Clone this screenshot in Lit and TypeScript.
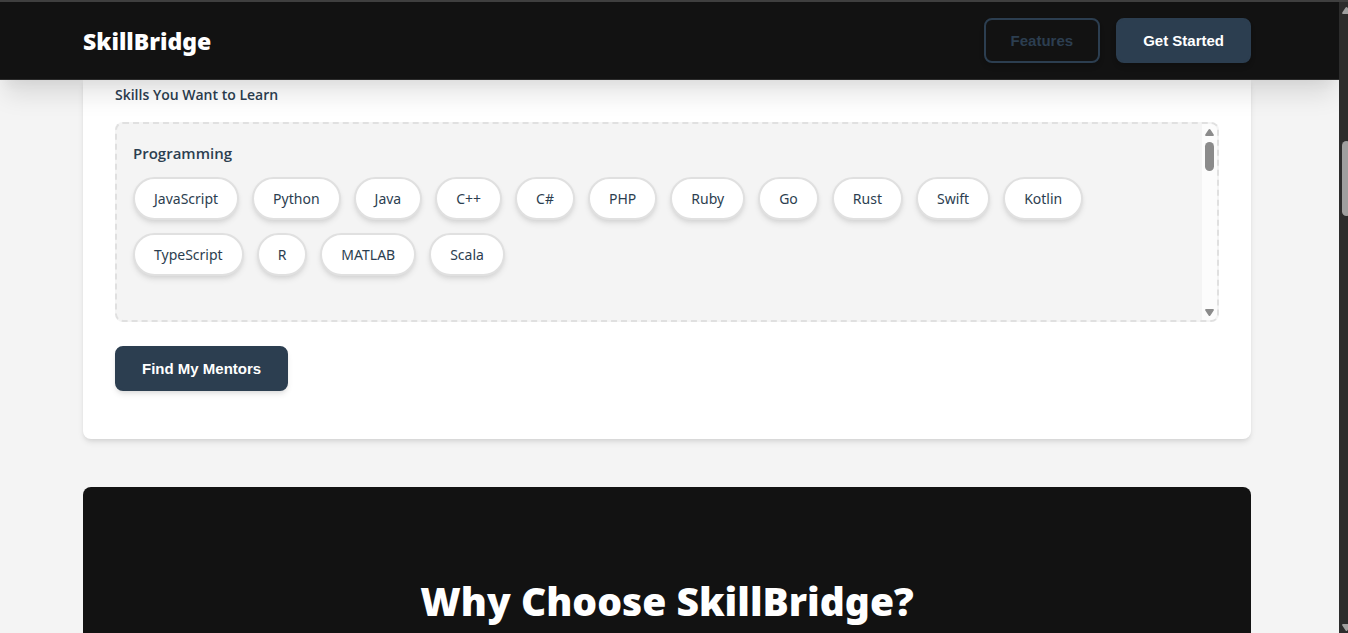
import { LitElement, html, css } from "lit";
import { customElement, state } from "lit/decorators.js";

const LANGUAGES = [
  "JavaScript", "Python", "Java", "C++", "C#", "PHP", "Ruby", "Go", "Rust",
  "Swift", "Kotlin", "TypeScript", "R", "MATLAB", "Scala",
];

@customElement("app-root")
export class AppRoot extends LitElement {
  @state() private picked: string[] = [];

  static styles = css`
    :host {
      display: flex;
      flex-direction: column;
      height: 100vh;
      overflow: hidden;
      background: #f4f4f4;
      color: #2c3e50;
      font-family: "Open Sans", "Noto Sans", sans-serif;
      font-size: 14px;
      line-height: 24px;
      --shadow: 0 4px 6px -1px rgba(0, 0, 0, 0.1), 0 2px 4px -1px rgba(0, 0, 0, 0.06);
    }
    * { box-sizing: border-box; }
    .edge { flex: none; height: 2px; background: #3f3f3f; }
    .frame { flex: 1; display: flex; min-height: 0; }
    .page { flex: 1; min-width: 0; display: flex; flex-direction: column; overflow: hidden; }
    .bar {
      flex: none;
      position: relative;
      z-index: 1;
      padding: 16px 21px 16px 16px;
      background: #121212;
      border-bottom: 1px solid #2c2c2c;
      box-shadow: 0 20px 25px -5px rgba(0, 0, 0, 0.1), 0 10px 10px -5px rgba(0, 0, 0, 0.04);
    }
    .inner {
      display: flex;
      align-items: center;
      justify-content: space-between;
      max-width: 1168px;
      margin: 0 auto;
    }
    .logo {
      color: #fff;
      font-family: "Noto Sans", "Open Sans", sans-serif;
      font-size: 23px;
      font-weight: 900;
      line-height: 32px;
      text-decoration: none;
    }
    .nav { display: flex; gap: 16px; }
    .btn {
      height: 45px;
      padding: 0 25px;
      border: 2px solid #2c3e50;
      border-radius: 8px;
      background: #2c3e50;
      color: #fff;
      font: 700 15px "Liberation Sans", Arial, sans-serif;
      box-shadow: var(--shadow);
    }
    .ghost { background: transparent; color: #2c3e50; }
    .body { flex: 1; min-height: 0; padding: 0 21px 0 16px; }
    .card {
      max-width: 1168px;
      margin: 0 auto 48px;
      padding: 3px 32px 48px;
      background: #fff;
      border-radius: 0 0 8px 8px;
      box-shadow: var(--shadow);
    }
    .label { margin: 0 0 15px; font-size: 14px; font-weight: 600; }
    .picker {
      display: flex;
      height: 200px;
      margin-bottom: 24px;
      border: 2px dashed #e0e0e0;
      border-radius: 8px;
      background: #f4f4f4;
      overflow: hidden;
    }
    .group { flex: 1; padding: 16px; }
    .title { margin: 0 0 11px; font-size: 15px; line-height: 26px; font-weight: 600; }
    .tags { display: flex; flex-wrap: wrap; gap: 13px; }
    .tag {
      height: 43px;
      padding: 0 19px;
      border: 2px solid #e0e0e0;
      border-radius: 22px;
      background: #fff;
      color: #2c3e50;
      font: 400 14px "Noto Sans", "Open Sans", sans-serif;
      box-shadow: var(--shadow);
    }
    .tag[aria-pressed="true"] { border-color: #2c3e50; }
    .track {
      flex: none;
      width: 15px;
      padding: 5px 3px 4px;
      display: flex;
      flex-direction: column;
      background: #fcfcfc;
    }
    .track svg { display: block; width: 9px; height: 7px; fill: #8b8b8b; }
    .thumb { height: 29px; margin: 6px 0 auto; border-radius: 5px; background: #8b8b8b; }
    .rail {
      flex: none;
      width: 9px;
      padding: 5px 0 2px 3px;
      display: flex;
      flex-direction: column;
      overflow: hidden;
      background: #2c2c2c;
    }
    .rail svg { display: block; width: 9px; height: 7px; fill: #9f9f9f; }
    .rail .thumb { width: 9px; height: 75px; margin-top: 127px; background: #9f9f9f; }
    .why {
      max-width: 1168px;
      min-height: 400px;
      margin: 0 auto;
      padding: 82px 32px;
      border-radius: 8px 8px 0 0;
      background: #121212;
      color: #fff;
      text-align: center;
    }
    .why h2 {
      margin: 0;
      font-family: "Noto Sans", "Open Sans", sans-serif;
      font-size: 39px;
      line-height: 64px;
      font-weight: 900;
    }
  `;

  private toggle(name: string) {
    this.picked = this.picked.includes(name)
      ? this.picked.filter((n) => n !== name)
      : [...this.picked, name];
  }

  private up = html`<svg viewBox="0 0 9 7" aria-hidden="true"><path d="M4.5 0Q5 0 5.4.6L8.7 5.4Q9.3 7 8 7H1Q-.3 7 .3 5.4L3.6.6Q4 0 4.5 0Z"/></svg>`;
  private down = html`<svg viewBox="0 0 9 7" aria-hidden="true"><path d="M4.5 7Q5 7 5.4 6.4L8.7 1.6Q9.3 0 8 0H1Q-.3 0 .3 1.6L3.6 6.4Q4 7 4.5 7Z"/></svg>`;

  render() {
    return html`
      <div class="edge"></div>
      <div class="frame">
        <div class="page">
          <header class="bar">
            <div class="inner">
              <a class="logo" href="#">SkillBridge</a>
              <nav class="nav">
                <button class="btn ghost" type="button">Features</button>
                <button class="btn" type="button">Get Started</button>
              </nav>
            </div>
          </header>
          <main class="body">
            <section class="card">
              <p class="label" id="learn">Skills You Want to Learn</p>
              <div class="picker" role="group" aria-labelledby="learn">
                <div class="group">
                  <h4 class="title">Programming</h4>
                  <div class="tags">
                    ${LANGUAGES.map((name) => html`<button
                      class="tag"
                      type="button"
                      aria-pressed=${this.picked.includes(name) ? "true" : "false"}
                      @click=${() => this.toggle(name)}
                    >${name}</button>`)}
                  </div>
                </div>
                <div class="track">${this.up}<div class="thumb"></div>${this.down}</div>
              </div>
              <button class="btn" type="button">Find My Mentors</button>
            </section>
            <section class="why"><h2>Why Choose SkillBridge?</h2></section>
          </main>
        </div>
        <div class="rail">${this.up}<div class="thumb"></div>${this.down}</div>
      </div>
    `;
  }
}
